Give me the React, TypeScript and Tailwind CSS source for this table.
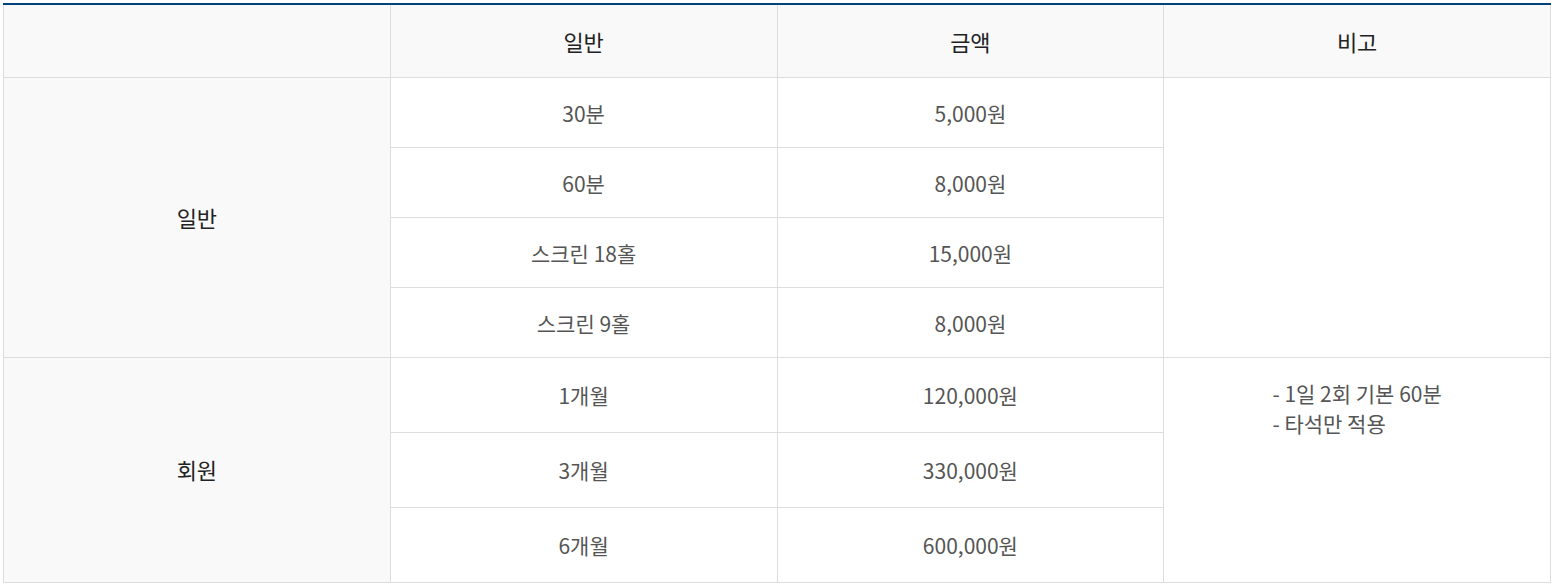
import React from 'react'

const general = [
  { label: '30분', price: '5,000원' },
  { label: '60분', price: '8,000원' },
  { label: '스크린 18홀', price: '15,000원' },
  { label: '스크린 9홀', price: '8,000원' },
]

const member = [
  { label: '1개월', price: '120,000원' },
  { label: '3개월', price: '330,000원' },
  { label: '6개월', price: '600,000원' },
]

const th = 'h-[73px] border border-[#dddddd] border-t-0 bg-[#f9f9f9] pt-[2px] text-center align-middle text-[22px] font-normal text-[#222222]'
const groupCell = 'border border-[#dddddd] bg-[#f9f9f9] text-center align-middle text-[22px] text-[#222222]'
const cell = 'border border-[#dddddd] pt-[3px] text-center align-middle text-[21px] text-[#555555]'

export default function App() {
  return (
    <div className="bg-white px-[3px] pt-[3px]" style={{ fontFamily: '"Noto Sans CJK KR", "Noto Sans", sans-serif' }}>
      <table className="w-full table-fixed border-collapse border-t-2 border-t-[#00437a]">
        <colgroup>
          <col className="w-1/4" />
          <col className="w-1/4" />
          <col className="w-1/4" />
          <col className="w-1/4" />
        </colgroup>
        <thead>
          <tr>
            <th className={th}></th>
            <th className={th}>일반</th>
            <th className={th}>금액</th>
            <th className={th}>비고</th>
          </tr>
        </thead>
        <tbody>
          {general.map((row, i) => (
            <tr key={row.label} className="h-[70px]">
              {i === 0 && (
                <td rowSpan={4} className={groupCell}>
                  일반
                </td>
              )}
              <td className={cell}>{row.label}</td>
              <td className={cell}>{row.price}</td>
              {i === 0 && <td rowSpan={4} className="border border-[#dddddd]"></td>}
            </tr>
          ))}
          {member.map((row, i) => (
            <tr key={row.label} className="h-[75px]">
              {i === 0 && (
                <td rowSpan={3} className={groupCell}>
                  회원
                </td>
              )}
              <td className={cell}>{row.label}</td>
              <td className={cell}>{row.price}</td>
              {i === 0 && (
                <td rowSpan={3} className="border border-[#dddddd] pt-[20px] text-center align-top text-[21px] leading-[30px] text-[#555555]">
                  <div className="inline-block text-left">
                    <p>- 1일 2회 기본 60분</p>
                    <p>- 타석만 적용</p>
                  </div>
                </td>
              )}
            </tr>
          ))}
        </tbody>
      </table>
    </div>
  )
}
